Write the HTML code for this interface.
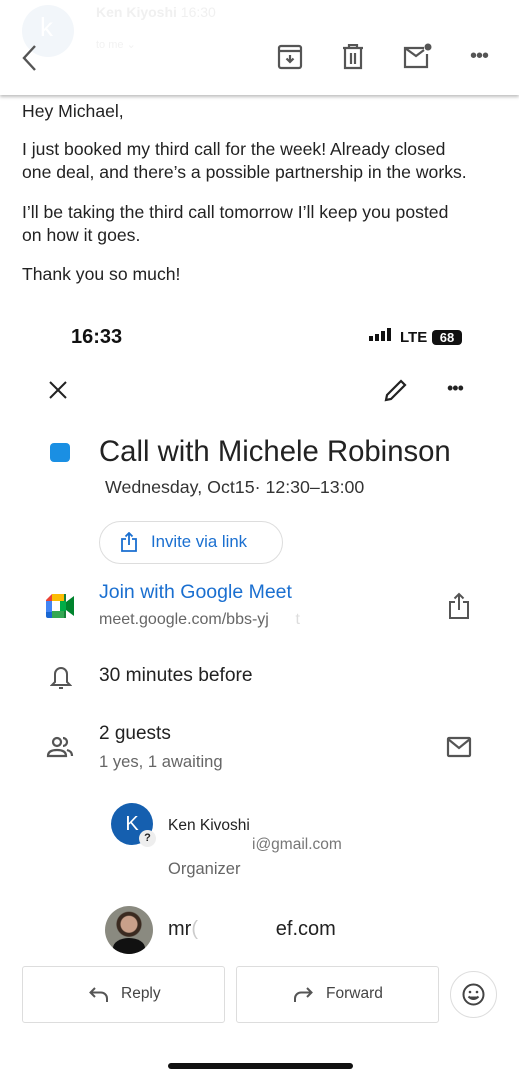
<!DOCTYPE html>
<html><head><meta charset="utf-8"><style>
*{margin:0;padding:0;box-sizing:border-box}
body{width:519px;height:1080px;background:#fff;font-family:"Liberation Sans",Arial,sans-serif;position:relative;overflow:hidden;color:#222}
.a{position:absolute;white-space:nowrap}
svg{position:absolute}
</style></head><body>
<div class="a" style="left:22px;top:5px;width:52px;height:52px;border-radius:50%;background:#f2f6fa"></div>
<div class="a" style="left:40px;top:12px;font-size:26px;color:#fff">k</div>
<div class="a" style="left:96px;top:4px;font-size:14px;font-weight:bold;color:#f0f0f0">Ken Kiyoshi <span style="font-weight:normal">16:30</span></div>
<div class="a" style="left:96px;top:38px;font-size:11px;color:#f2f2f2">to me ⌄</div>
<div class="a" style="left:0;top:0;width:519px;height:95px;box-shadow:0 2px 3px rgba(0,0,0,0.25)"></div>
<svg style="left:20px;top:44px" width="20" height="28" viewBox="0 0 20 28"><path d="M15 2 L4 14 L15 26" stroke="#555" stroke-width="2.4" fill="none"/></svg>
<svg style="left:277px;top:44px" width="26" height="26" viewBox="0 0 26 26" fill="none" stroke="#555" stroke-width="2.2"><rect x="2" y="2" width="22" height="22" rx="2"/><path d="M2 7h22M13 11v7M9.5 14.5 13 18l3.5-3.5"/></svg>
<svg style="left:342px;top:44px" width="22" height="26" viewBox="0 0 22 26" fill="none" stroke="#555" stroke-width="2.2"><path d="M1 4h20M7 4V1h8v3M3 4v20h16V4M9 9v11M13 9v11"/></svg>
<svg style="left:403px;top:42px" width="30" height="28" viewBox="0 0 30 28" fill="none" stroke="#555" stroke-width="2.2"><path d="M21 6H2v19h22V12M2 6l11 8 8-6"/><circle cx="25" cy="5" r="3.5" fill="#555" stroke="none"/></svg>
<div class="a" style="left:470px;top:45px;font-size:20px;color:#555;letter-spacing:-1px">•••</div>
<div class="a" style="left:22px;top:100px;font-size:17.6px;line-height:23px;color:#222">Hey Michael,</div>
<div class="a" style="left:22px;top:138px;font-size:17.6px;line-height:23px">I just booked my third call for the week! Already closed<br>one deal, and there’s a possible partnership in the works.</div>
<div class="a" style="left:22px;top:201px;font-size:17.6px;line-height:23px">I’ll be taking the third call tomorrow I’ll keep you posted<br>on how it goes.</div>
<div class="a" style="left:22px;top:263px;font-size:17.6px;line-height:23px">Thank you so much!</div>
<div class="a" style="left:71px;top:326px;font-size:20px;font-weight:bold;color:#111">16:33</div>
<div class="a" style="left:369px;top:336px;width:4px;height:5px;background:#111"></div>
<div class="a" style="left:375px;top:334px;width:4px;height:7px;background:#111"></div>
<div class="a" style="left:381px;top:331px;width:4px;height:10px;background:#111"></div>
<div class="a" style="left:387px;top:328px;width:4px;height:13px;background:#111"></div>
<div class="a" style="left:400px;top:329px;font-size:15px;font-weight:bold;color:#111">LTE</div>
<div class="a" style="left:432px;top:330px;width:30px;height:15px;border-radius:4px;background:#111;color:#fff;font-size:13px;font-weight:bold;text-align:center;line-height:15px">68</div>
<svg style="left:48px;top:380px" width="20" height="20" viewBox="0 0 20 20"><path d="M2 2 18 18M18 2 2 18" stroke="#222" stroke-width="2"/></svg>
<svg style="left:382px;top:378px" width="26" height="26" viewBox="0 0 26 26" fill="none" stroke="#222" stroke-width="2.2"><path d="M4 22 5 17 19 3l4 4-14 14z"/></svg>
<div class="a" style="left:447px;top:378px;font-size:18px;color:#222;letter-spacing:-1px">•••</div>
<div class="a" style="left:50px;top:443px;width:20px;height:19px;border-radius:4px;background:#1a8fe3"></div>
<div class="a" style="left:99px;top:435px;font-size:29.3px;color:#222">Call with Michele Robinson</div>
<div class="a" style="left:105px;top:477px;font-size:17.8px;color:#333">Wednesday, Oct15· 12:30–13:00</div>
<div class="a" style="left:99px;top:521px;width:184px;height:43px;border:1px solid #ddd;border-radius:22px"></div>
<svg style="left:121px;top:532px" width="16" height="20" viewBox="0 0 16 20" fill="none" stroke="#1a6fd0" stroke-width="1.8"><path d="M5 7H1v12h14V7h-4M8 13V1M4.5 4.5 8 1l3.5 3.5"/></svg>
<div class="a" style="left:151px;top:532px;font-size:16.8px;color:#1a6fd0">Invite via link</div>
<svg style="left:46px;top:594px" width="29" height="24" viewBox="0 0 29 24"><path d="M6 0h14v7H6z" fill="#fbbc04"/><path d="M0 6 6 0v7H0z" fill="#ea4335"/><path d="M0 7h6v11H0z" fill="#4285f4"/><path d="M0 18h6v6H2a2 2 0 0 1-2-2z" fill="#1967d2"/><path d="M6 17h14v7H6z" fill="#34a853"/><path d="M20 0v24h-2V0z" fill="#188038"/><path d="M20 8 28 2v20l-8-6z" fill="#00832d"/><rect x="6" y="7" width="12" height="10" fill="#fff"/><path d="M14 7h6v10h-6z" fill="#00ac47"/></svg>
<div class="a" style="left:99px;top:581px;font-size:19.5px;color:#1a6fd0">Join with Google Meet</div>
<div class="a" style="left:99px;top:611px;font-size:16px;color:#666">meet.google.com/bbs-yj<span style="color:#ddd">&nbsp;&nbsp;&nbsp;&nbsp;&nbsp;&nbsp;t</span></div>
<svg style="left:448px;top:592px" width="22" height="28" viewBox="0 0 22 28" fill="none" stroke="#555" stroke-width="2"><path d="M7 10H2v16h18V10h-5M11 18V2M6.5 6.5 11 2l4.5 4.5"/></svg>
<svg style="left:50px;top:665px" width="22" height="26" viewBox="0 0 22 26" fill="none" stroke="#555" stroke-width="2"><path d="M11 3a6 6 0 0 0-6 6v8l-3 3h18l-3-3V9a6 6 0 0 0-6-6zM9 23h4"/></svg>
<div class="a" style="left:99px;top:665px;font-size:19.2px;color:#222">30 minutes before</div>
<svg style="left:46px;top:736px" width="28" height="22" viewBox="0 0 28 22" fill="none" stroke="#555" stroke-width="2.2"><circle cx="11" cy="6" r="4"/><path d="M2 20c0-5 5-6 9-6s9 1 9 6zM17 2a4 4 0 0 1 0 8M21 14c3 1 5 2 5 6"/></svg>
<div class="a" style="left:99px;top:723px;font-size:19px;color:#222">2 guests</div>
<div class="a" style="left:99px;top:752px;font-size:16.6px;color:#666">1 yes, 1 awaiting</div>
<svg style="left:446px;top:736px" width="26" height="22" viewBox="0 0 26 22" fill="none" stroke="#555" stroke-width="2.2"><rect x="2" y="2" width="22" height="18" rx="1"/><path d="M2 3l11 9 11-9"/></svg>
<div class="a" style="left:111px;top:803px;width:42px;height:42px;border-radius:50%;background:#155faf;color:#fff;font-size:20px;text-align:center;line-height:42px">K</div>
<div class="a" style="left:139px;top:830px;width:17px;height:17px;border-radius:50%;background:#eee;font-size:11px;font-weight:bold;text-align:center;line-height:17px;color:#222">?</div>
<div class="a" style="left:168px;top:817px;font-size:15.5px;color:#222">Ken Kivoshi</div>
<div class="a" style="left:252px;top:836px;font-size:15.5px;color:#777">i@gmail.com</div>
<div class="a" style="left:168px;top:860px;font-size:16.5px;color:#666">Organizer</div>
<div class="a" style="left:105px;top:906px;width:48px;height:48px;border-radius:50%;background:radial-gradient(circle at 50% 38%,#c9a08a 0 8px,#3a2a20 9px 12px,#8a8a80 13px);overflow:hidden"><div style="position:absolute;left:8px;top:32px;width:32px;height:20px;border-radius:50% 50% 0 0;background:#111"></div></div>
<div class="a" style="left:168px;top:918px;font-size:20px;color:#222">mr<span style="color:#ccc">(</span>&nbsp;&nbsp;&nbsp;&nbsp;&nbsp;&nbsp;&nbsp;&nbsp;&nbsp;&nbsp;&nbsp;&nbsp;&nbsp;&nbsp;ef.com</div>
<div class="a" style="left:22px;top:966px;width:203px;height:57px;border:1px solid #ddd;border-radius:3px"></div>
<svg style="left:89px;top:986px" width="20" height="17" viewBox="0 0 20 17" fill="none" stroke="#555" stroke-width="2"><path d="M6 2 1.5 6.5 6 11M2 6.5h10a6 6 0 0 1 6 6V16"/></svg>
<div class="a" style="left:121px;top:985px;font-size:15.5px;color:#444">Reply</div>
<div class="a" style="left:236px;top:966px;width:203px;height:57px;border:1px solid #ddd;border-radius:3px"></div>
<svg style="left:293px;top:986px" width="20" height="17" viewBox="0 0 20 17" fill="none" stroke="#555" stroke-width="2"><path d="M14 2l4.5 4.5L14 11M18 6.5H8a6 6 0 0 0-6 6V16"/></svg>
<div class="a" style="left:326px;top:985px;font-size:15.5px;color:#444">Forward</div>
<div class="a" style="left:450px;top:971px;width:47px;height:47px;border-radius:50%;border:1px solid #ddd"></div>
<svg style="left:462px;top:983px" width="23" height="23" viewBox="0 0 23 23" fill="none" stroke="#444" stroke-width="2"><circle cx="11.5" cy="11.5" r="10"/><circle cx="8" cy="9" r="1.3" fill="#444" stroke="none"/><circle cx="15" cy="9" r="1.3" fill="#444" stroke="none"/><path d="M6.5 13.5q5 5 10 0" fill="#444"/></svg>
<div class="a" style="left:168px;top:1063px;width:185px;height:6px;border-radius:3px;background:#111"></div>
</body></html>
